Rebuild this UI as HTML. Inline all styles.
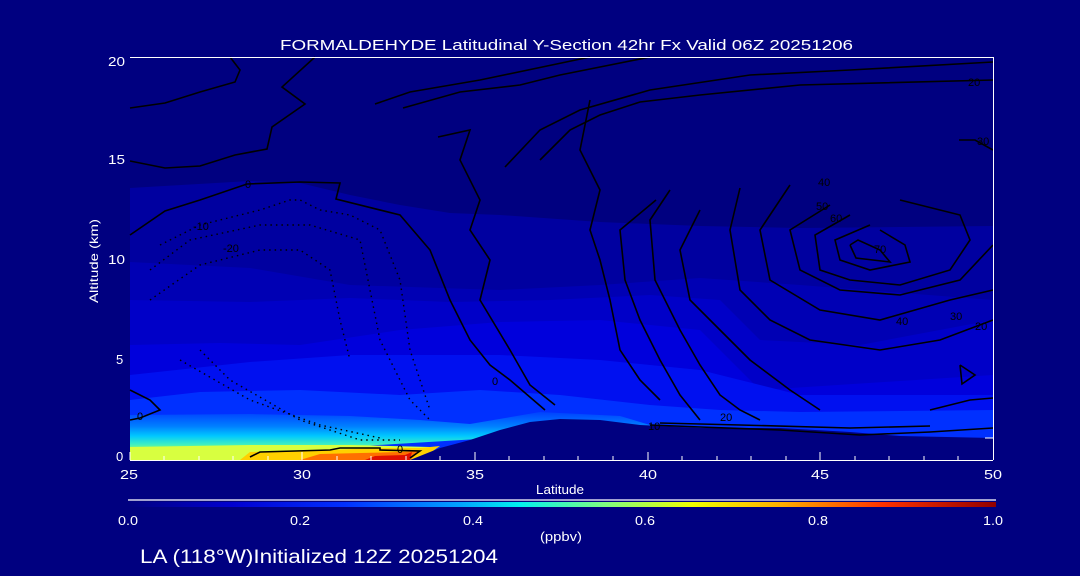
<!DOCTYPE html>
<html><head><meta charset="utf-8"><style>
html,body{margin:0;padding:0;background:#000080;width:1080px;height:576px;overflow:hidden}
svg{display:block}
text{font-family:"Liberation Sans",sans-serif;fill:#fff}
</style></head><body>
<svg width="1080" height="576" viewBox="0 0 1080 576">
<defs>
<linearGradient id="cb" x1="0" x2="1" y1="0" y2="0">
<stop offset="0" stop-color="#000080"/>
<stop offset="0.12" stop-color="#0000d0"/>
<stop offset="0.25" stop-color="#0030ff"/>
<stop offset="0.38" stop-color="#00a0ff"/>
<stop offset="0.45" stop-color="#00f0f0"/>
<stop offset="0.55" stop-color="#80ff80"/>
<stop offset="0.65" stop-color="#f0ff00"/>
<stop offset="0.75" stop-color="#ffb000"/>
<stop offset="0.87" stop-color="#ff3000"/>
<stop offset="1" stop-color="#900000"/>
</linearGradient>
<linearGradient id="sfc" x1="0" x2="0" y1="0" y2="1">
<stop offset="0" stop-color="#0040ff"/>
<stop offset="0.3" stop-color="#0080ff"/>
<stop offset="0.5" stop-color="#00c8ff"/>
<stop offset="0.68" stop-color="#40f0c0"/>
<stop offset="0.82" stop-color="#b0ff50"/>
<stop offset="1" stop-color="#e8ff20"/>
</linearGradient>
</defs>
<rect width="1080" height="576" fill="#000080"/>
<rect x="130" y="57" width="863" height="403" fill="#000080"/>
<polygon fill="#0000a0" points="130,188 250,181 300,183 350,195 400,205 450,213 500,215 600,222 700,226 800,228 993,226 993,460 130,460"/>
<polygon fill="#0000b4" points="130,262 250,268 350,285 500,290 600,285 700,278 800,285 993,300 993,460 130,460"/>
<polygon fill="#0000c8" points="130,300 250,302 350,298 450,302 550,300 650,295 720,300 760,340 860,345 993,320 993,460 130,460"/>
<polygon fill="#0000dc" points="130,345 220,343 300,345 400,330 500,322 600,320 700,330 760,390 993,375 993,460 130,460"/>
<polygon fill="#0010f0" points="130,375 250,362 350,355 500,355 600,360 700,370 800,395 993,395 993,460 130,460"/>
<polygon fill="#0030ff" points="130,400 200,392 300,390 400,395 480,390 560,395 650,405 720,410 800,412 993,410 993,460 130,460"/>
<polygon fill="url(#sfc)" points="130,415 250,414 350,416 420,420 470,424 540,412 620,416 660,428 130,460"/>
<polygon fill="#d8ff40" points="130,447 250,445 350,445 430,447 420,460 130,460"/>
<polygon fill="#ffd000" points="240,460 250,452 330,450 380,448 420,448 440,446 420,460"/>
<polygon fill="#ff7000" points="300,460 320,454 400,452 420,451 410,460"/>
<polygon fill="#e01000" points="365,460 375,456 405,455 412,452 410,460"/>
<polygon fill="#000080" points="410,460 440,448 470,440 500,430 530,422 560,419 600,420 640,425 700,428 780,428 850,432 900,436 993,438 993,460"/>
<g fill="none" stroke="#000" stroke-width="1.6">
<polyline points="130,108 165,103 200,92 235,82 240,70 230,57"/>
<polyline points="130,161 165,168 200,166 235,155 267,149 272,127 305,104 282,87 315,57"/>
<polyline points="130,235 165,211 200,200 247,184 300,182 340,183 336,199 400,215 430,250 450,300 470,340 490,365 510,380 545,410"/>
<polyline points="375,104 410,92 480,80 590,57"/>
<polyline points="403,108 460,92 520,85 560,75 650,57"/>
<polyline points="438,137 470,130 460,160 480,200 470,230 490,260 480,300 510,350 530,385 555,405"/>
<polyline points="505,167 540,130 580,110 650,90 750,75 850,70 993,62"/>
<polyline points="540,160 570,130 600,115 640,102 700,95 800,85 993,80"/>
<polyline points="590,100 580,150 600,190 590,230 600,260 610,300 620,350 640,380 660,400"/>
<polyline points="656,200 620,230 625,280 640,320 660,360 680,395 700,420"/>
<polyline points="700,210 680,250 690,300 720,330 750,360 790,390 820,410"/>
<polyline points="740,188 730,230 740,290 770,320 810,340 880,350 940,340 993,320"/>
<polyline points="790,185 760,230 770,280 820,310 880,320 950,300 993,290"/>
<polyline points="830,205 790,230 800,270 840,290 900,295 960,280 993,245"/>
<polyline points="850,215 815,235 820,270 850,280 900,285 950,270 970,240 960,215 900,200"/>
<polyline points="870,225 835,240 840,260 870,270 910,262 905,245 880,230"/>
<polyline points="850,245 858,240 880,250 890,262 856,258 850,245"/>
<polyline points="959,140 975,140 993,150"/>
<polyline points="670,190 650,220 655,280 680,330 700,365 720,395 740,410 760,420"/>
<polyline points="960,365 975,375 962,384 960,365"/>
<polyline points="930,410 970,400 993,398"/>
<polyline points="650,425 700,427 780,430 860,435 930,432 993,428"/>
<polyline points="660,423 740,425 850,428 930,426"/>
<polyline points="250,457 260,452 330,450 340,448 380,448 380,450 420,451 410,458"/>
<polyline points="130,390 150,400 160,410 140,418 130,420"/>
</g>
<g fill="none" stroke="#000" stroke-width="1.4" stroke-dasharray="1.5,4">
<polyline points="160,245 200,225 260,210 290,200 300,200 320,210 350,215 380,230 400,280 410,350 430,410"/>
<polyline points="150,270 190,240 260,225 310,225 360,240 370,290 380,340 410,400 430,420"/>
<polyline points="150,300 200,265 260,250 300,250 330,270 340,320 350,360"/>
<polyline points="200,350 230,380 300,420 360,440 400,440"/>
<polyline points="180,360 250,400 320,425 380,438"/>
</g>
<g font-size="11">
<text x="245" y="188" style="fill:#000">0</text>
<text x="193" y="230" style="fill:#000">-10</text>
<text x="223" y="252" style="fill:#000">-20</text>
<text x="137" y="420" style="fill:#000">0</text>
<text x="397" y="453" style="fill:#000">0</text>
<text x="492" y="385" style="fill:#000">0</text>
<text x="648" y="430" style="fill:#000">10</text>
<text x="720" y="421" style="fill:#000">20</text>
<text x="818" y="186" style="fill:#000">40</text>
<text x="816" y="210" style="fill:#000">50</text>
<text x="830" y="222" style="fill:#000">60</text>
<text x="874" y="253" style="fill:#000">70</text>
<text x="896" y="325" style="fill:#000">40</text>
<text x="950" y="320" style="fill:#000">30</text>
<text x="975" y="330" style="fill:#000">20</text>
<text x="977" y="145" style="fill:#000">30</text>
<text x="968" y="86" style="fill:#000">20</text>
</g>
<g stroke="#fff" stroke-width="1">
<line x1="130" y1="57.5" x2="993" y2="57.5"/>
<line x1="130" y1="460.5" x2="993" y2="460.5"/>
<line x1="993.5" y1="57" x2="993.5" y2="460"/>
<line x1="130" y1="460" x2="130" y2="452"/><line x1="164" y1="460" x2="164" y2="456"/><line x1="199" y1="460" x2="199" y2="456"/><line x1="233" y1="460" x2="233" y2="456"/><line x1="268" y1="460" x2="268" y2="456"/><line x1="302" y1="460" x2="302" y2="452"/><line x1="337" y1="460" x2="337" y2="456"/><line x1="371" y1="460" x2="371" y2="456"/><line x1="406" y1="460" x2="406" y2="456"/><line x1="440" y1="460" x2="440" y2="456"/><line x1="475" y1="460" x2="475" y2="452"/><line x1="509" y1="460" x2="509" y2="456"/><line x1="544" y1="460" x2="544" y2="456"/><line x1="578" y1="460" x2="578" y2="456"/><line x1="613" y1="460" x2="613" y2="456"/><line x1="648" y1="460" x2="648" y2="452"/><line x1="682" y1="460" x2="682" y2="456"/><line x1="717" y1="460" x2="717" y2="456"/><line x1="751" y1="460" x2="751" y2="456"/><line x1="786" y1="460" x2="786" y2="456"/><line x1="820" y1="460" x2="820" y2="452"/><line x1="855" y1="460" x2="855" y2="456"/><line x1="889" y1="460" x2="889" y2="456"/><line x1="924" y1="460" x2="924" y2="456"/><line x1="958" y1="460" x2="958" y2="456"/>
<line x1="985" y1="438" x2="993" y2="438"/>
</g>
<g font-size="13">
<text x="280" y="50" font-size="15" textLength="573" lengthAdjust="spacingAndGlyphs">FORMALDEHYDE Latitudinal Y-Section 42hr  Fx Valid 06Z 20251206</text>
<text x="108" y="66" textLength="17" lengthAdjust="spacingAndGlyphs">20</text><text x="108" y="164" textLength="17" lengthAdjust="spacingAndGlyphs">15</text><text x="108" y="264" textLength="17" lengthAdjust="spacingAndGlyphs">10</text><text x="116" y="364">5</text><text x="116" y="461">0</text>
<text x="120" y="479" textLength="18" lengthAdjust="spacingAndGlyphs">25</text><text x="293" y="479" textLength="18" lengthAdjust="spacingAndGlyphs">30</text><text x="466" y="479" textLength="18" lengthAdjust="spacingAndGlyphs">35</text><text x="639" y="479" textLength="18" lengthAdjust="spacingAndGlyphs">40</text><text x="811" y="479" textLength="18" lengthAdjust="spacingAndGlyphs">45</text><text x="984" y="479" textLength="18" lengthAdjust="spacingAndGlyphs">50</text>
<text x="536" y="494" font-size="13" textLength="48" lengthAdjust="spacingAndGlyphs">Latitude</text>
<text x="0" y="0" font-size="12" textLength="84" lengthAdjust="spacingAndGlyphs" transform="translate(98,303) rotate(-90)">Altitude (km)</text>
<text x="118" y="525" textLength="20" lengthAdjust="spacingAndGlyphs">0.0</text><text x="290" y="525" textLength="20" lengthAdjust="spacingAndGlyphs">0.2</text><text x="463" y="525" textLength="20" lengthAdjust="spacingAndGlyphs">0.4</text><text x="635" y="525" textLength="20" lengthAdjust="spacingAndGlyphs">0.6</text><text x="808" y="525" textLength="20" lengthAdjust="spacingAndGlyphs">0.8</text><text x="983" y="525" textLength="20" lengthAdjust="spacingAndGlyphs">1.0</text>
<text x="540" y="541" font-size="13" textLength="42" lengthAdjust="spacingAndGlyphs">(ppbv)</text>
<text x="140" y="563" font-size="19" textLength="358" lengthAdjust="spacingAndGlyphs">LA (118°W)Initialized 12Z 20251204</text>
</g>
<line x1="128" y1="500" x2="996" y2="500" stroke="#fff" stroke-width="1.2"/>
<rect x="128" y="502" width="868" height="5" fill="url(#cb)"/>
</svg>
</body></html>
